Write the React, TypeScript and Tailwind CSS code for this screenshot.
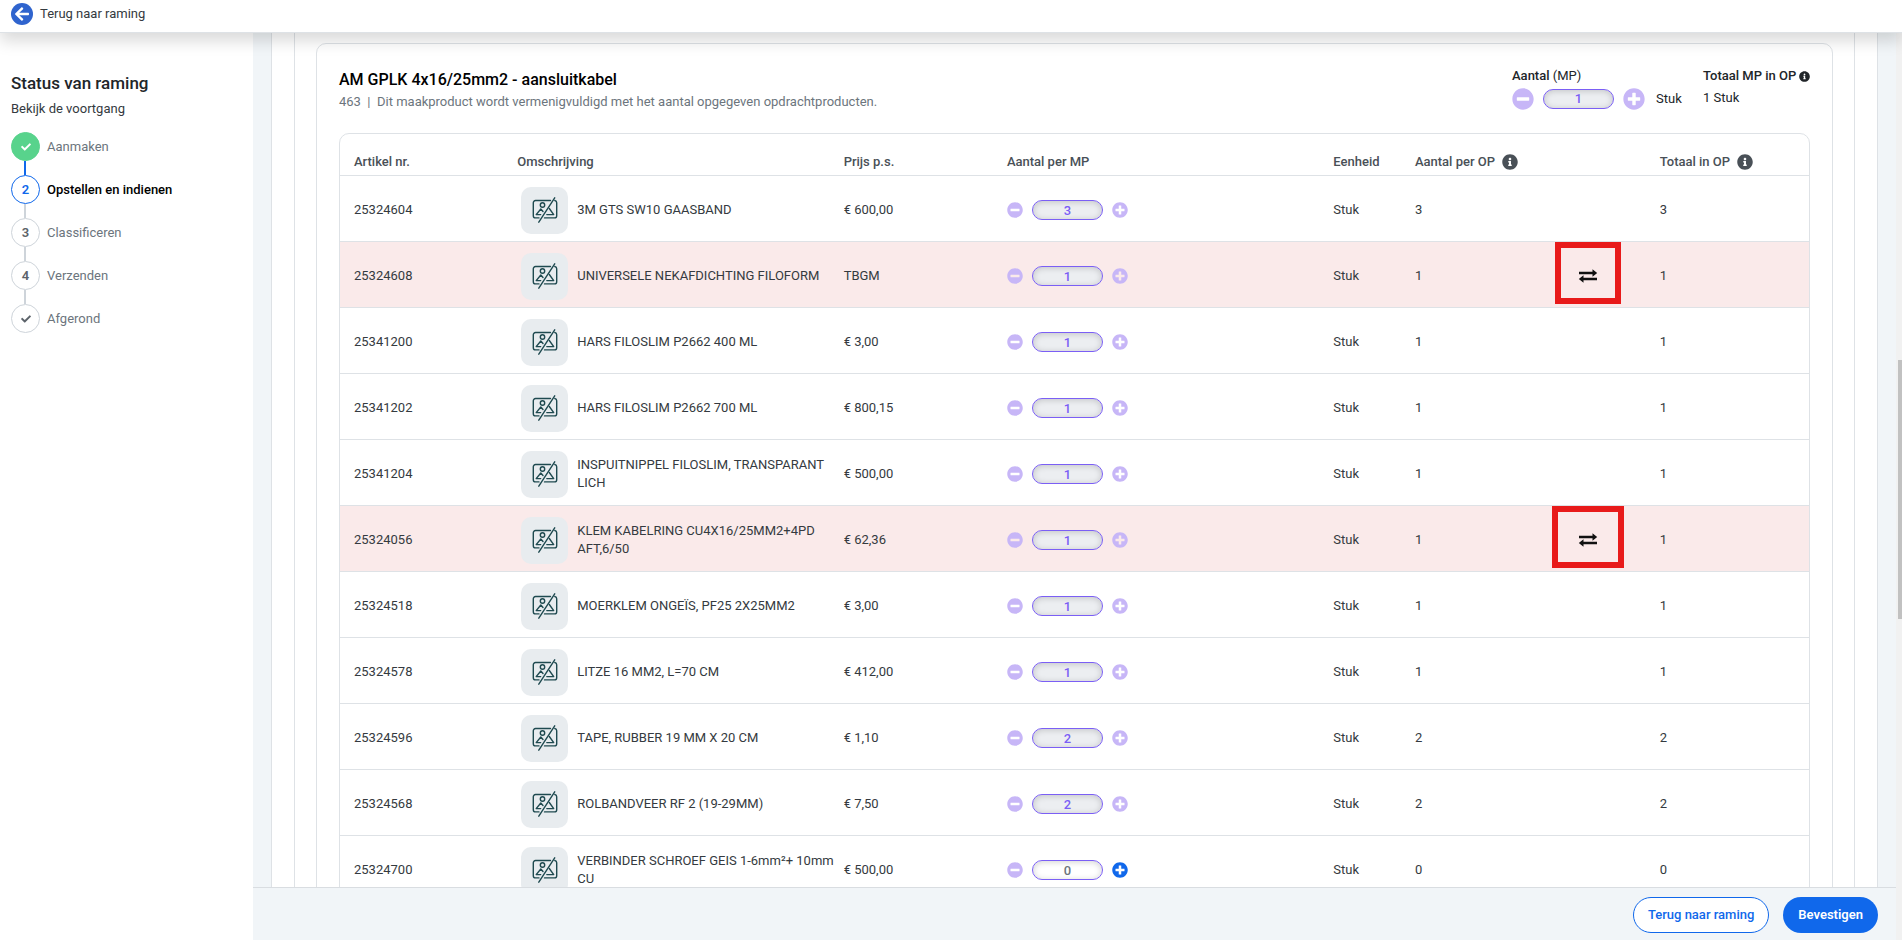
import { FaArrowLeft, FaCheck, FaInfoCircle, FaMinusCircle, FaPlusCircle } from "react-icons/fa";

type Article = {
  nr: string;
  name: string;
  price: string;
  amount: number;
  replace?: string;
};

const articles: Article[] = [
  { nr: "25324604", name: "3M GTS SW10 GAASBAND", price: "€ 600,00", amount: 3 },
  { nr: "25324608", name: "UNIVERSELE NEKAFDICHTING FILOFORM", price: "TBGM", amount: 1, replace: "h-[62px] w-[66px]" },
  { nr: "25341200", name: "HARS FILOSLIM P2662 400 ML", price: "€ 3,00", amount: 1 },
  { nr: "25341202", name: "HARS FILOSLIM P2662 700 ML", price: "€ 800,15", amount: 1 },
  { nr: "25341204", name: "INSPUITNIPPEL FILOSLIM, TRANSPARANT LICH", price: "€ 500,00", amount: 1 },
  { nr: "25324056", name: "KLEM KABELRING CU4X16/25MM2+4PD AFT,6/50", price: "€ 62,36", amount: 1, replace: "h-[62px] w-[72px]" },
  { nr: "25324518", name: "MOERKLEM ONGEÏS, PF25 2X25MM2", price: "€ 3,00", amount: 1 },
  { nr: "25324578", name: "LITZE 16 MM2, L=70 CM", price: "€ 412,00", amount: 1 },
  { nr: "25324596", name: "TAPE, RUBBER 19 MM X 20 CM", price: "€ 1,10", amount: 2 },
  { nr: "25324568", name: "ROLBANDVEER RF 2 (19-29MM)", price: "€ 7,50", amount: 2 },
  { nr: "25324700", name: "VERBINDER SCHROEF GEIS 1-6mm²+ 10mm CU", price: "€ 500,00", amount: 0 },
];

const steps = [
  { label: "Aanmaken", state: "done" },
  { label: "Opstellen en indienen", state: "active" },
  { label: "Classificeren", state: "todo" },
  { label: "Verzenden", state: "todo" },
  { label: "Afgerond", state: "todo" },
];

const circleStyles: Record<string, string> = {
  done: "border-[#58d38c] bg-[#58d38c] text-white",
  active: "border-[#1068eb] bg-white text-[#1068eb]",
  todo: "border-[#ced4da] bg-white text-[#5c636a]",
};

const NoImageIcon = () => (
  <svg viewBox="0 0 26 26" className="size-[26px]" fill="none" stroke="#1f4a50" strokeWidth="1.4" strokeLinecap="round" strokeLinejoin="round">
    <path d="M18.500 3.500H3.500a2.200 2.200 0 0 0-2.200 2.200v13a2.200 2.200 0 0 0 2.200 2.200H7M12.500 20.900h10a2.200 2.200 0 0 0 2.200-2.200v-13a2.200 2.200 0 0 0-1.900-2.200" />
    <circle cx="10.500" cy="8" r="2.200" />
    <path d="M8.700 17.600H4.200L8.800 12l2.200 2.500M14.800 17.600h6.900L17.300 11.500" />
    <path d="M22.700.8 6.800 25.200" />
  </svg>
);

const SwapIcon = () => (
  <svg viewBox="0 0 20 14" className="h-[14px] w-5" fill="#111">
    <path d="M1 2.700h13.500V.3L19.200 4l-4.700 3.700V5.200H1z" />
    <path d="M19 8.800H5.500V6.300L.8 10l4.700 3.700v-2.400H19z" />
  </svg>
);

const Quantity = ({ value, label, large }: { value: number; label: string; large?: boolean }) => {
  const icon = large ? "size-[22px]" : "size-4";
  return (
    <div className="flex items-center gap-[9px]">
      <button type="button" aria-label="Minder" className="text-[#c7b6f7]">
        <FaMinusCircle className={icon} />
      </button>
      <input
        type="text"
        aria-label={label}
        defaultValue={value}
        className={`h-5 w-[71px] rounded-full border border-[#7b5ff5] text-center text-[13px] font-medium shadow-[inset_0_1px_6px_rgba(0,0,0,0.18)] ${
          value === 0 ? "bg-white text-[#6c757d]" : "bg-[#eceef1] text-[#7b5ff5]"
        }`}
      />
      <button type="button" aria-label="Meer" className={value === 0 ? "text-[#1068eb]" : "text-[#c7b6f7]"}>
        <FaPlusCircle className={icon} />
      </button>
    </div>
  );
};

const Sidebar = () => (
  <aside className="w-[253px] shrink-0 bg-white px-[11px] pt-[38px]">
    <h2 className="text-[17px] leading-6 font-medium text-[#212529]">Status van raming</h2>
    <p className="mt-1 text-[13px] leading-5 text-[#343a40]">Bekijk de voortgang</p>
    <ol className="mt-[13px]">
      {steps.map((step, i) => (
        <li key={step.label}>
          {i > 0 && (
            <div className={`ml-[13px] h-[14px] w-[2px] ${step.state === "active" ? "bg-[#1068eb]" : "bg-[#ced4da]"}`} />
          )}
          <div className="flex items-center gap-[7px]">
            <span
              className={`flex size-[29px] items-center justify-center rounded-full border text-[13px] font-semibold ${circleStyles[step.state]}`}
            >
              {i === 0 || i === steps.length - 1 ? <FaCheck className="size-[10px]" /> : i + 1}
            </span>
            <span
              className={`text-[13px] leading-5 ${step.state === "active" ? "font-medium text-black" : "text-[#6c757d]"}`}
            >
              {step.label}
            </span>
          </div>
        </li>
      ))}
    </ol>
  </aside>
);

const ProductHeader = () => (
  <div className="flex items-start justify-between">
    <div className="pt-[2px]">
      <h1 className="text-[16px] leading-6 font-medium text-black">AM GPLK 4x16/25mm2 - aansluitkabel</h1>
      <p className="text-[13px] leading-5 text-[#6c757d]">
        463&nbsp; |&nbsp; Dit maakproduct wordt vermenigvuldigd met het aantal opgegeven opdrachtproducten.
      </p>
    </div>
    <div className="flex text-[13px] leading-5 text-[#212529]">
      <div className="w-[191px]">
        <div>
          <span className="font-medium">Aantal</span> (MP)
        </div>
        <div className="mt-[2px] flex items-center gap-[11px]">
          <Quantity value={1} label="Aantal (MP)" large />
          <span>Stuk</span>
        </div>
      </div>
      <div className="w-[107px]">
        <div className="flex items-center justify-between font-medium whitespace-nowrap">
          Totaal MP in OP <FaInfoCircle className="size-[11px] shrink-0" />
        </div>
        <div className="mt-[2px]">1 Stuk</div>
      </div>
    </div>
  </div>
);

const ArticleTable = () => (
  <div className="mt-[21px] rounded-t-[10px] border border-[#dee2e6]">
    <table className="w-full table-fixed text-left text-[13px] leading-[18px] text-[#343a40]">
      <colgroup>
        <col className="w-1/9" />
        <col className="w-2/9" />
        <col className="w-1/9" />
        <col className="w-2/9" />
        <col className="w-1/18" />
        <col className="w-1/9" />
        <col className="w-1/18" />
        <col className="w-1/9" />
      </colgroup>
      <thead>
        <tr className="h-[41px] border-b border-[#dee2e6] align-bottom whitespace-nowrap text-[#495057] [&>th]:px-[14px] [&>th]:pb-1 [&>th]:font-medium">
          <th>Artikel nr.</th>
          <th>Omschrijving</th>
          <th>Prijs p.s.</th>
          <th>Aantal per MP</th>
          <th>Eenheid</th>
          <th>
            <span className="flex items-center gap-[7px]">
              Aantal per OP <FaInfoCircle className="size-4" />
            </span>
          </th>
          <th aria-label="Vervangen"></th>
          <th>
            <span className="flex items-center gap-[7px]">
              Totaal in OP <FaInfoCircle className="size-4" />
            </span>
          </th>
        </tr>
      </thead>
      <tbody>
        {articles.map((article) => (
          <tr
            key={article.nr}
            className={`h-[66px] border-b border-[#dee2e6] [&>td]:px-[14px] [&>td]:pt-1 ${article.replace ? "bg-[#faeaea]" : "bg-white"}`}
          >
            <td>{article.nr}</td>
            <td>
              <div className="-mr-7 flex items-center gap-[9px] pl-1">
                <span className="flex size-[47px] shrink-0 items-center justify-center rounded-[10px] bg-[#e8ecef]">
                  <NoImageIcon />
                </span>
                <span>{article.name}</span>
              </div>
            </td>
            <td>{article.price}</td>
            <td>
              <Quantity value={article.amount} label={`Aantal per MP ${article.nr}`} />
            </td>
            <td>Stuk</td>
            <td>{article.amount}</td>
            <td>
              {article.replace && (
                <div className="relative w-5">
                  <button type="button" aria-label="Artikel vervangen" className="block">
                    <SwapIcon />
                  </button>
                  <span
                    className={`pointer-events-none absolute top-1 left-1/2 -translate-x-1/2 -translate-y-1/2 border-[6px] border-[#e81a1a] ${article.replace}`}
                  />
                </div>
              )}
            </td>
            <td>{article.amount}</td>
          </tr>
        ))}
      </tbody>
    </table>
  </div>
);

export default function App() {
  return (
    <div className="flex h-screen flex-col overflow-hidden bg-white font-['Roboto',sans-serif]">
      <header className="z-10 flex h-[33px] shrink-0 border-b border-[#dee2e6] bg-white px-[11px] pt-[3px] shadow-[0_8px_16px_rgba(0,0,0,0.15)]">
        <a href="#" className="flex h-[22px] items-center gap-[7px] text-[13px] text-[#343a40]">
          <span className="flex size-[22px] items-center justify-center rounded-full bg-[#2f64ce] text-white">
            <FaArrowLeft className="size-4" />
          </span>
          Terug naar raming
        </a>
      </header>

      <div className="flex min-h-0 flex-1">
        <Sidebar />
        <div className="flex min-w-0 flex-1 flex-col bg-[#f1f5f8]">
          <main className="min-h-0 flex-1 overflow-hidden px-[18px]">
            <div className="border-x border-[#dee2e6] bg-white px-[22px]">
              <div className="border-x border-[#dee2e6] px-[21px] pt-[10px]">
                <div className="rounded-t-[10px] border border-[#dee2e6] px-[22px] pt-[22px]">
                  <ProductHeader />
                  <ArticleTable />
                </div>
              </div>
            </div>
          </main>
          <footer className="flex h-[53px] shrink-0 items-center justify-end gap-[14px] border-t border-[#d9dde1] px-[18px] pt-[2px]">
            <button type="button" className="h-9 rounded-full border border-[#1068eb] bg-white px-[14px] text-[13px] font-medium text-[#1068eb]">
              Terug naar raming
            </button>
            <button type="button" className="h-9 rounded-full bg-[#1068eb] px-[15px] text-[13px] font-semibold text-white">
              Bevestigen
            </button>
          </footer>
        </div>
        <div className="w-[6px] shrink-0 bg-[#f1f1f1] pt-[327px] pl-[2px]">
          <div className="h-[259px] bg-[#c1c1c1]" />
        </div>
      </div>
    </div>
  );
}
